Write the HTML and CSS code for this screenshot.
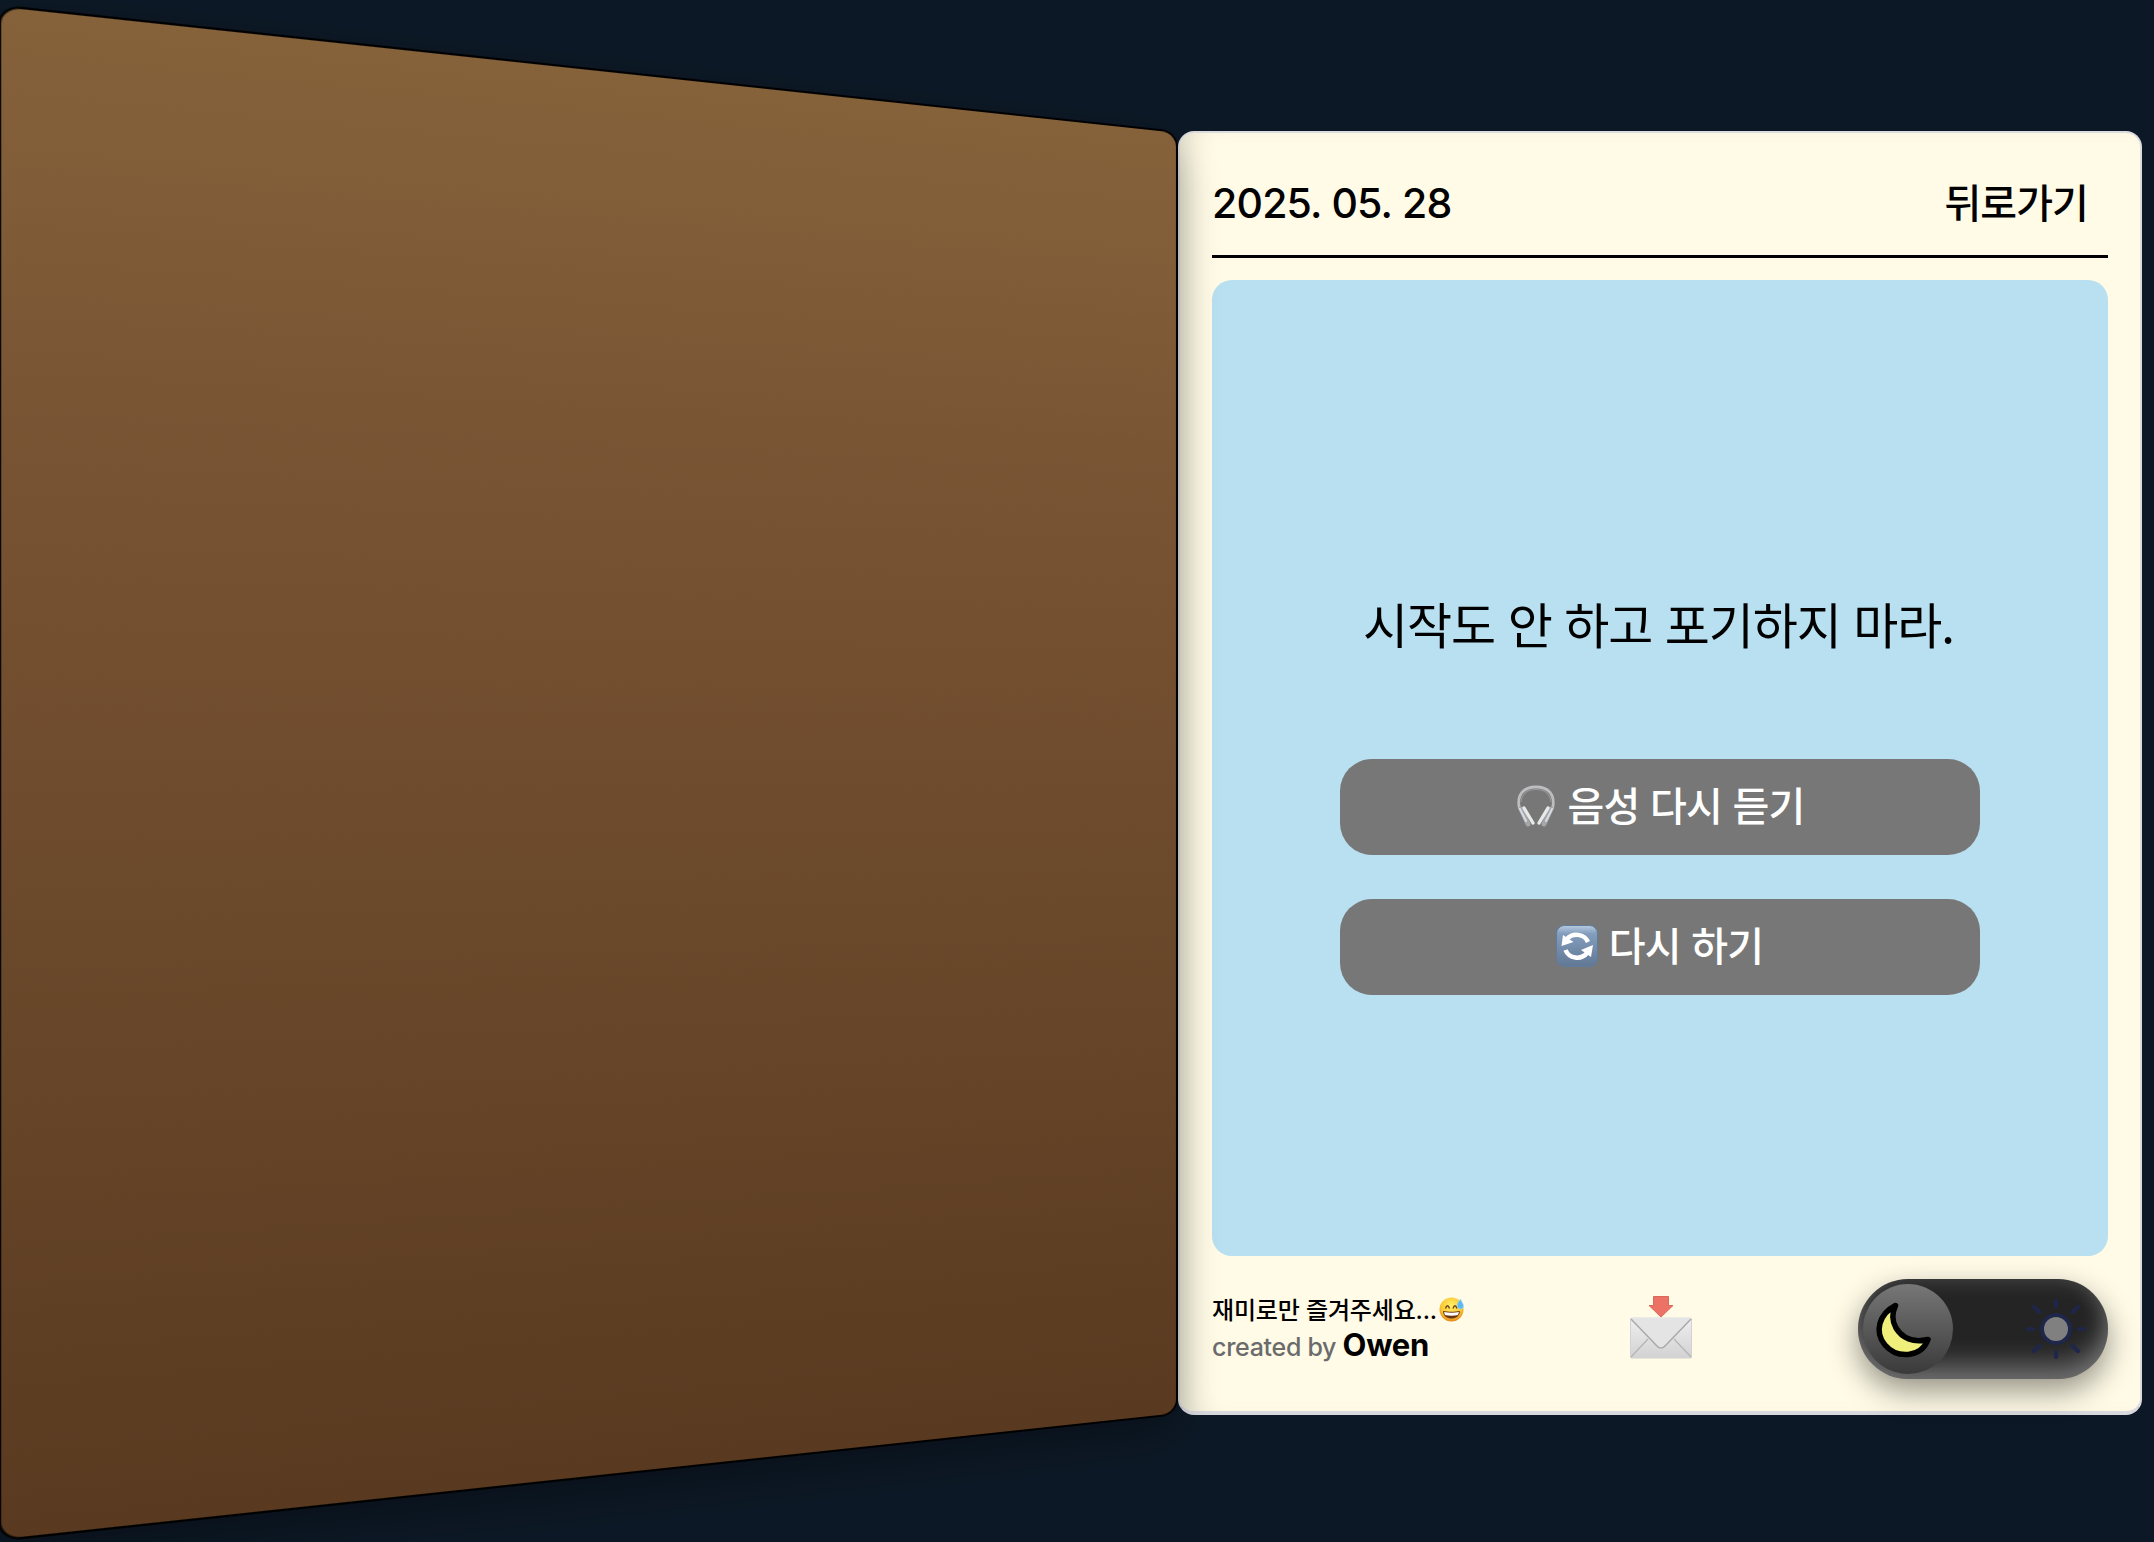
FILE: index.html
```
<!DOCTYPE html>
<html lang="ko">
<head>
<meta charset="utf-8">
<title>Book</title>
<link rel="stylesheet" href="styles.css">
</head>
<body>
<main class="book">
  <div class="cover"></div>
  <section class="page">
    <header class="header">
      <time class="date">2025. 05. 28</time>
      <a class="back">뒤로가기</a>
    </header>
    <div class="panel">
      <p class="quote">시작도 안 하고 포기하지 마라.</p>
      <div class="actions">
        <button class="btn">
          <svg class="headphones" width="42" height="42" viewBox="0 0 42 42" fill="none">
            <path d="M4.500 24C1 9 9 2 21 2s20 7 16.500 22" stroke="#bdbdbf" stroke-width="2.800"/>
            <path d="M6 17C7 8 13 4.500 21 4.500S35 8 36 17" stroke="#96969a" stroke-width="1.200"/>
            <g stroke-linecap="round">
              <path d="M6 24l7 15M36 24l-7 15" stroke="#a6a6a9" stroke-width="5"/>
              <path d="M5 24l6 12M37 24l-6 12" stroke="#d5dbe5" stroke-width="2"/>
              <path d="M9 23l9 15M33 23l-9 15" stroke="#e9e9ea" stroke-width="3.400"/>
            </g>
          </svg>
          <span>음성 다시 듣기</span>
        </button>
        <button class="btn">
          <svg class="refresh" width="42" height="42" viewBox="0 0 42 42">
            <defs><linearGradient id="tile" x2="0" y2="1"><stop stop-color="#b8cbe2"/><stop offset=".2" stop-color="#839dbd"/><stop offset="1" stop-color="#617894"/></linearGradient></defs>
            <rect x=".5" y=".5" width="41" height="41" rx="8" fill="url(#tile)" stroke="#5f7c9d"/>
            <g fill="none" stroke="#fff" stroke-width="4.500"><path d="M32 17A12.500 12 0 0 0 11 14"/><path d="M9.500 25A12.500 12 0 0 0 31 28"/></g>
            <path d="M7 10L5.500 21l12-4zM35 32l2-12-12 5z" fill="#fff"/>
          </svg>
          <span>다시 하기</span>
        </button>
      </div>
    </div>
    <footer class="footer">
      <div class="credit">
        <div class="note"><span>재미로만 즐겨주세요...</span><svg width="25" height="25" viewBox="0 0 25 25">
          <defs><radialGradient id="face" cx=".5" cy=".35" r=".65"><stop stop-color="#fff06a"/><stop offset=".65" stop-color="#fbc934"/><stop offset="1" stop-color="#e48a1c"/></radialGradient></defs>
          <circle cx="12.500" cy="12.500" r="12" fill="url(#face)"/>
          <path d="M4 14c0 10 17 10 17 0-5 1-12 1-17 0z" fill="#6b3514"/>
          <path d="M5 15c5 1 10 1 15 0l-1 3c-4 1-9 1-13 0z" fill="#fff"/>
          <path d="M6.500 11.500Q8.500 6 10.500 11.500M14 11.500Q16 6 18 11.500" fill="none" stroke="#704010" stroke-width="1.400"/>
          <path d="M21.500 2c-2 3-4 5-3 8 1 2.500 5 2.500 6 0 .5-3-2-5-3-8z" fill="#5cb9f2" stroke="#a5dcfa" stroke-width=".6"/>
        </svg></div>
        <div class="by">created by <strong>Owen</strong></div>
      </div>
      <svg class="mail" width="62" height="64" viewBox="0 0 62 64">
        <defs><linearGradient id="paper" x2="0" y2="1"><stop stop-color="#efefef"/><stop offset="1" stop-color="#d2d2d3"/></linearGradient></defs>
        <rect x=".5" y="23" width="61" height="40" rx="1" fill="url(#paper)" stroke="#d2d2d2"/>
        <path d="M1 62l17-18M61 62L44 44" fill="none" stroke="#b5b5b7" stroke-width="1.200"/>
        <path d="M1 24l25 26q5 6 10 0l25-26" fill="#e4e4e5" stroke="#a9a9ac" stroke-width="1.400"/>
        <path d="M1 23h60" stroke="#ececec"/>
        <path d="M23.500 1.500h15v9H43L31 22 19 10.500h4.500z" fill="#eb7265" stroke="#d9685c" stroke-linejoin="round"/>
      </svg>
      <div class="toggle">
        <div class="knob">
          <svg width="90" height="90" viewBox="0 0 90 90"><path d="M32.500 21.500C16 30 11 48 22 61c12 14 36 13 43-5.500C50 59 39 54 33 44c-4-7-4-15-.5-22.500z" fill="#f0ef7b" stroke="#000" stroke-width="5.500" stroke-linejoin="round"/></svg>
        </div>
        <svg class="sun" width="62" height="62" viewBox="0 0 62 62">
          <circle cx="31" cy="31" r="14" fill="#808080" stroke="#1e264a" stroke-width="4"/>
          <path d="M31 3v5M31 54v5M3 31h5M54 31h5M9 9l5.500 5M53 9l-5.500 5M9 53l5.500-5M53 53l-5.500-5" stroke="#1e264a" stroke-width="4.200" stroke-linecap="round"/>
        </svg>
      </div>
    </footer>
  </section>
</main>
</body>
</html>
```
FILE: styles.css
```
* { box-sizing: border-box; }
body {
  margin: 0;
  height: 1542px;
  overflow: hidden;
  background: #0c1825;
  color: #000;
  font-family: Inter, "Noto Sans CJK KR", sans-serif;
}
.book {
  display: grid;
  grid-template-columns: 964px 964px;
  width: 1928px;
  height: 1284px;
  margin: 131px 0 0 214px;
  perspective: 2000px;
  perspective-origin: 75% 50%;
}
.cover {
  border: 2px solid #000;
  border-radius: 16px;
  background: linear-gradient(#86623b, #7a5534 25%, #593a20);
  box-shadow: 0 16px 40px rgba(0, 0, 0, .3);
  transform: rotateY(20deg);
  transform-origin: right center;
}
.page {
  display: flex;
  flex-direction: column;
  padding: 0 32px;
  border: 2px solid #dcdcdf;
  border-bottom: 4px solid #d9d9de;
  border-radius: 16px;
  background: #fffbe7;
  box-shadow: inset 20px 0 32px -20px rgba(0, 0, 0, .15);
}
.header {
  display: flex;
  flex: none;
  justify-content: space-between;
  align-items: center;
  height: 125px;
  padding: 17px 20px 0 0;
  border-bottom: 3px solid #000;
  font-size: 41px;
}
.date { font-weight: 550; letter-spacing: -.8px; }
.back { margin-top: -4px; font-size: 40px; font-weight: 500; letter-spacing: -.9px; }
.panel {
  display: flex;
  flex: none;
  flex-direction: column;
  align-items: center;
  height: 976px;
  margin-top: 22px;
  padding-top: 307px;
  border-radius: 20px;
  background: #b8e0f0;
}
.quote {
  margin: 0 3px 0 0;
  height: 72px;
  line-height: 72px;
  font-family: "Noto Sans CJK KR", sans-serif;
  font-size: 49px;
  letter-spacing: -1.1px;
  white-space: nowrap;
}
.actions {
  display: flex;
  flex-direction: column;
  gap: 44px;
  margin-top: 100px;
}
.btn {
  display: flex;
  justify-content: center;
  align-items: center;
  gap: 11px;
  width: 640px;
  height: 96px;
  padding: 0 1px 3px 0;
  border: 0;
  border-radius: 32px;
  background: #777;
  color: #fff;
  font: 500 40px "Noto Sans CJK KR", sans-serif;
  letter-spacing: -.8px;
}
.btn span { margin-bottom: 4px; }
.footer {
  display: flex;
  justify-content: space-between;
  padding-top: 23px;
}
.credit { width: 300px; padding-top: 12px; }
.note {
  display: flex;
  align-items: center;
  gap: 2px;
  height: 36px;
  font-size: 24px;
  font-weight: 500;
  letter-spacing: -.15px;
  white-space: nowrap;
}
.note span { margin-bottom: 2px; }
.by {
  height: 40px;
  line-height: 36px;
  color: #6b6b6b;
  font-size: 25px;
  font-weight: 500;
  letter-spacing: -.3px;
}
.by strong { color: #000; font-size: 31px; font-weight: 700; }
.mail { margin: 16px 48px 0 0; }
.toggle {
  display: flex;
  justify-content: space-between;
  align-items: center;
  width: 250px;
  height: 100px;
  padding: 0 21px 0 5px;
  border-radius: 50px;
  background: #242424;
  box-shadow: inset 0 -16px 25px rgba(255, 255, 255, .3), inset 0 3px 20px rgba(255, 255, 255, .12), 0 12px 30px rgba(0, 0, 0, .42);
}
.knob {
  width: 90px;
  height: 90px;
  border-radius: 50%;
  background: linear-gradient(#777, #3a3a3a);
}
```
